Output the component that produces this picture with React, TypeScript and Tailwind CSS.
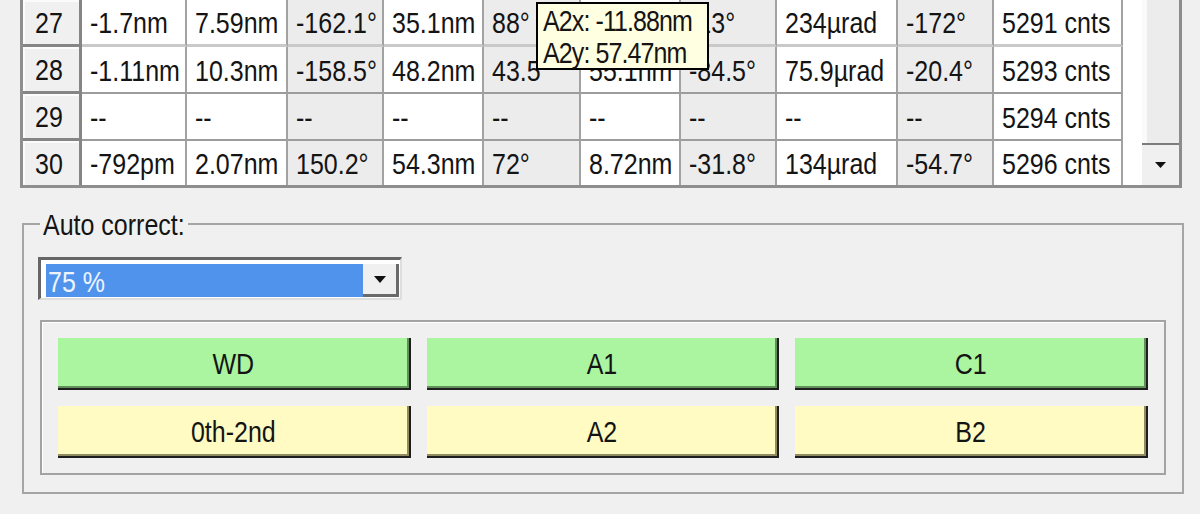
import React from "react";

const widths = [105, 101, 96, 100, 97, 100, 96, 121, 96, 129];
const shaded = [false, false, true, false, true, false, true, false, true, false];

const rows: { n: number; c: string[] }[] = [
  { n: 27, c: ["-1.7nm", "7.59nm", "-162.1°", "35.1nm", "88°", "53.1nm", "-13°", "234µrad", "-172°", "5291 cnts"] },
  { n: 28, c: ["-1.11nm", "10.3nm", "-158.5°", "48.2nm", "43.5°", "55.1nm", "-84.5°", "75.9µrad", "-20.4°", "5293 cnts"] },
  { n: 29, c: ["--", "--", "--", "--", "--", "--", "--", "--", "--", "5294 cnts"] },
  { n: 30, c: ["-792pm", "2.07nm", "150.2°", "54.3nm", "72°", "8.72nm", "-31.8°", "134µrad", "-54.7°", "5296 cnts"] },
];

function T({ children }: { children: React.ReactNode }) {
  return <span className="inline-block scale-y-[1.2] whitespace-nowrap">{children}</span>;
}

function Arrow({ w = 12, h = 7 }: { w?: number; h?: number }) {
  return (
    <svg width={w} height={h} viewBox={`0 0 ${w} ${h}`}>
      <polygon points={`0,0 ${w},0 ${w / 2},${h}`} fill="#111" />
    </svg>
  );
}

function Row({ r, idx }: { r: { n: number; c: string[] }; idx: number }) {
  const last = idx === rows.length - 1;
  const h = last ? "h-[44px]" : "h-[47px]";
  const dataBorder =
    idx === 0
      ? "border-b-[3px] border-b-[#c9c9c9]"
      : last
      ? ""
      : "border-b-2 border-b-[#9c9c9c]";
  return (
    <div className={`flex ${h}`}>
      <div
        className={`w-[59px] shrink-0 bg-[#f0f0f0] border-r-[3px] border-r-[#858585] ${
          last ? "" : "border-b-[3px] border-b-[#858585]"
        } shadow-[inset_2px_2px_0_#fbfbfb] flex items-center pl-[12px]`}
      >
        <T>{r.n}</T>
      </div>
      {r.c.map((v, i) => (
        <div
          key={i}
          style={{ width: widths[i] }}
          className={`shrink-0 flex items-center pl-[8px] border-r-2 border-r-[#a2a2a2] ${dataBorder} ${
            shaded[i] ? "bg-[#ececec]" : "bg-white"
          }`}
        >
          <T>{v}</T>
        </div>
      ))}
      <div className="flex-1 bg-white" />
    </div>
  );
}

function Btn({ label, green }: { label: string; green: boolean }) {
  return (
    <div
      className={`h-[52px] flex items-center justify-center border-r-2 border-b-2 border-[#1e1e1e] ${
        green
          ? "bg-[#abf5a0] shadow-[inset_-2px_-2px_0_#62905a]"
          : "bg-[#fffbc2] shadow-[inset_-2px_-2px_0_#8f8c62]"
      }`}
    >
      <T>{label}</T>
    </div>
  );
}

export default function App() {
  return (
    <div className="relative w-[1200px] h-[514px] overflow-hidden bg-[#f0f0f0] text-[#141414] text-[25px] leading-[30px] font-['Liberation_Sans',Arial,sans-serif]">
      {/* Grid section */}
      <div className="flex h-[190px] pl-[20px]">
        <div className="w-[1122px] h-[188px] flex flex-col border-l-[3px] border-b-[3px] border-[#8e8e8e] overflow-hidden">
          {rows.map((r, i) => (
            <Row key={r.n} r={r} idx={i} />
          ))}
        </div>
        <div className="w-[40px] h-[188px] flex flex-col border-r-[3px] border-r-[#8c8c8c] border-b-[3px] border-b-[#8e8e8e]">
          <div className="flex-1 bg-[#ececec] border-l-[5px] border-l-[#fafafa]" />
          <div className="h-[42px] bg-[#f0f0f0] border-t-2 border-t-[#7c7c7c] flex items-center justify-center">
            <Arrow w={11} h={6} />
          </div>
        </div>
      </div>

      {/* Auto correct group */}
      <fieldset className="mt-[19px] ml-[22px] w-[1162px] border-2 border-[#a5a5a5] px-[14px] pb-[17px]">
        <legend className="ml-[2px] px-[3px] leading-[30px]">
          <T>Auto correct:</T>
        </legend>
        <div className="mt-[18px] w-[364px] h-[43px] flex bg-white border-t-[3px] border-l-[3px] border-t-[#666666] border-l-[#666666] border-b-2 border-r-2 border-b-[#dedede] border-r-[#dedede] pt-[4px] pl-[5px] pb-[1px] pr-[1px]">
          <div className="flex-1 bg-[#4f93ed] text-[#eef4ff] flex items-center pl-[2px]">
            <T>75 %</T>
          </div>
          <div className="w-[36px] bg-[#f0f0f0] border-r-[3px] border-b-[3px] border-[#6a6a6a] flex items-center justify-center">
            <Arrow w={12} h={7} />
          </div>
        </div>
        <div className="mt-[20px] mx-[2px] border-2 border-[#a3a3a3] shadow-[inset_1px_1px_0_#ffffff] pt-[16px] px-[16px] pb-[15px] grid grid-cols-3 gap-4">
          <Btn label="WD" green />
          <Btn label="A1" green />
          <Btn label="C1" green />
          <Btn label="0th-2nd" green={false} />
          <Btn label="A2" green={false} />
          <Btn label="B2" green={false} />
        </div>
      </fieldset>

      {/* Tooltip */}
      <div className="absolute left-[536px] top-[2px] w-[173px] h-[68px] border-2 border-black bg-[#ffffe1] pl-[5px] leading-[32px] tracking-[-0.9px]">
        <div>
          <T>A2x: -11.88nm</T>
        </div>
        <div>
          <T>A2y: 57.47nm</T>
        </div>
      </div>
    </div>
  );
}
